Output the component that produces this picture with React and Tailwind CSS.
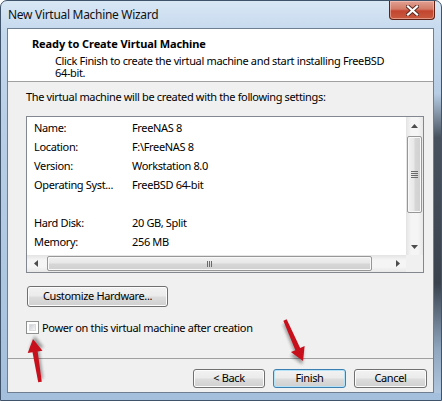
import React from "react";

function Arrow({ x1, y1, x2, y2 }) {
  const dx = x2 - x1;
  const dy = y2 - y1;
  const L = Math.sqrt(dx * dx + dy * dy);
  const a = (Math.atan2(dy, dx) * 180) / Math.PI;
  const h = 13;
  const pts = `0,-1.8 ${L - h},-2.6 ${L - h},-7.5 ${L},0 ${L - h},7.5 ${L - h},2.6 0,1.8`;
  return (
    <g transform={`translate(${x1} ${y1}) rotate(${a})`}>
      <polygon points={pts} fill="#000" opacity="0.35" transform="translate(3 2)" filter="url(#blur)" />
      <polygon points={pts} fill="#c8101c" />
    </g>
  );
}

function WinButton({ children, def = false, className = "" }) {
  return (
    <div
      className={`h-[19px] flex items-center justify-center rounded-[3px] border ${
        def
          ? "border-[#3c7fb1] shadow-[inset_0_0_0_1px_#b4e2f8]"
          : "border-[#707070] shadow-[inset_0_0_0_1px_#fcfcfc]"
      } bg-[linear-gradient(180deg,#f2f2f2_0%,#ebebeb_48%,#dddddd_52%,#cfcfcf_100%)] ${className}`}
    >
      {children}
    </div>
  );
}

const rows = [
  ["Name:", "FreeNAS 8"],
  ["Location:", "F:\\FreeNAS 8"],
  ["Version:", "Workstation 8.0"],
  ["Operating Syst...", "FreeBSD 64-bit"],
  ["", ""],
  ["Hard Disk:", "20 GB, Split"],
  ["Memory:", "256 MB"],
];

export default function App() {
  return (
    <div className="relative w-[442px] h-[401px] overflow-hidden bg-white font-['Segoe_UI','Noto_Sans','Liberation_Sans',sans-serif] text-[11px] tracking-[-0.35px] text-black">
      <div className="flex flex-col w-full h-full rounded-t-[7px] border border-[#3f536b] bg-[linear-gradient(180deg,#d9e7f5_0%,#c4d8ed_8%,#b9cfe7_30%,#aec7e1_70%,#a4bfdc_100%)]">
        {/* title bar */}
        <div className="h-[27px] flex items-start">
          <div className="pl-[7px] pt-[7px] leading-[14px] text-[12px] tracking-[-0.3px] text-[#111]">New Virtual Machine Wizard</div>
          <div className="ml-auto mr-[6px] w-[46px] h-[19px] rounded-b-[4px] border border-t-0 border-[#5e2217] bg-[linear-gradient(180deg,#e2a193_0%,#d27a66_45%,#c3452f_55%,#c85a3f_100%)] shadow-[inset_0_0_0_1px_rgba(255,210,200,0.5)] flex items-center justify-center">
            <svg width="13" height="11" viewBox="0 0 13 11">
              <path d="M2 1.5 L11 9.5 M11 1.5 L2 9.5" stroke="#5a2a22" strokeWidth="4" strokeLinecap="square" />
              <path d="M2 1.5 L11 9.5 M11 1.5 L2 9.5" stroke="#ffffff" strokeWidth="2.2" strokeLinecap="square" />
            </svg>
          </div>
        </div>
        {/* middle */}
        <div className="flex h-[365px]">
          <div className="w-[6px]" />
          <div className="w-[427px] flex flex-col border border-[#6f7f92] bg-[#f0f0f0]">
            {/* header */}
            <div className="h-[53px] bg-white border-b border-[#a0a0a0] pl-[24px] pt-[8px]">
              <div className="font-bold leading-[14px] tracking-[-0.1px]">Ready to Create Virtual Machine</div>
              <div className="pl-[23px] mt-[4px] leading-[12px] w-[365px]">
                Click Finish to create the virtual machine and start installing FreeBSD 64-bit.
              </div>
            </div>
            {/* body */}
            <div className="flex-1 flex flex-col pl-[18px] pt-[8px]">
              <div className="leading-[14px]">The virtual machine will be created with the following settings:</div>
              <div className="mt-[12px] w-[398px] h-[157px] border border-[#828790] bg-white flex flex-col">
                <div className="flex h-[138px]">
                  <div className="w-[379px] pt-[1px] overflow-hidden">
                    {rows.map(([k, v], i) => (
                      <div key={i} className="h-[19px] flex items-center pl-[7px] leading-[14px]">
                        <div className="w-[98px] shrink-0">{k}</div>
                        <div>{v}</div>
                      </div>
                    ))}
                  </div>
                  {/* vertical scrollbar */}
                  <div className="w-[17px] flex flex-col bg-[linear-gradient(90deg,#e3e3e3,#f5f5f5_30%,#f5f5f5_70%,#e8e8e8)]">
                    <div className="h-[17px] flex items-center justify-center">
                      <svg width="7" height="4" viewBox="0 0 7 4"><path d="M0 4 L3.5 0 L7 4 Z" fill="#4d4d4d" /></svg>
                    </div>
                    <div className="mx-[1px] mt-[2px] h-[77px] rounded-[2px] border border-[#979797] bg-[linear-gradient(90deg,#f1f1f1,#e8e8e8_45%,#d6d6d6_55%,#d0d0d0)] shadow-[inset_0_0_0_1px_#f8f8f8] flex flex-col items-center justify-center gap-[1px]">
                      <div className="w-[7px] h-[1px] bg-[#6a6a6a]" />
                      <div className="w-[7px] h-[1px] bg-[#6a6a6a]" />
                      <div className="w-[7px] h-[1px] bg-[#6a6a6a]" />
                      <div className="w-[7px] h-[1px] bg-[#6a6a6a]" />
                    </div>
                    <div className="flex-1" />
                    <div className="h-[17px] flex items-center justify-center">
                      <svg width="7" height="4" viewBox="0 0 7 4"><path d="M0 0 L3.5 4 L7 0 Z" fill="#4d4d4d" /></svg>
                    </div>
                  </div>
                </div>
                <div className="flex h-[17px]">
                  {/* horizontal scrollbar */}
                  <div className="w-[379px] flex items-stretch bg-[linear-gradient(180deg,#e3e3e3,#f5f5f5_30%,#f5f5f5_70%,#e8e8e8)]">
                    <div className="w-[17px] flex items-center justify-center">
                      <svg width="4" height="7" viewBox="0 0 4 7"><path d="M4 0 L0 3.5 L4 7 Z" fill="#4d4d4d" /></svg>
                    </div>
                    <div className="ml-[3px] my-[1px] w-[325px] rounded-[2px] border border-[#979797] bg-[linear-gradient(180deg,#f1f1f1,#e8e8e8_45%,#d6d6d6_55%,#d0d0d0)] shadow-[inset_0_0_0_1px_#f8f8f8] flex items-center justify-center gap-[1px]">
                      <div className="w-[1px] h-[6px] bg-[#6a6a6a]" />
                      <div className="w-[1px] h-[6px] bg-[#6a6a6a]" />
                      <div className="w-[1px] h-[6px] bg-[#6a6a6a]" />
                    </div>
                    <div className="flex-1" />
                    <div className="w-[17px] flex items-center justify-center">
                      <svg width="4" height="7" viewBox="0 0 4 7"><path d="M0 0 L4 3.5 L0 7 Z" fill="#4d4d4d" /></svg>
                    </div>
                  </div>
                  <div className="w-[17px] bg-[#f0f0f0]" />
                </div>
              </div>
              <WinButton className="mt-[13px] ml-[1px] w-[141px] h-[21px]">Customize Hardware...</WinButton>
              <div className="mt-[14px] flex items-center h-[13px]">
                <div className="w-[13px] h-[13px] border border-[#8e8f8f] bg-white p-[2px]">
                  <div className="w-full h-full bg-[linear-gradient(135deg,#cbcfd5,#f6f6f6)] border border-[#dadcde]" />
                </div>
                <div className="ml-[3px] leading-[14px]">Power on this virtual machine after creation</div>
              </div>
            </div>
            {/* footer */}
            <div className="h-[34px] border-t border-[#a0a0a0] flex justify-end items-start pt-[10px] pr-[6px] gap-[8px]">
              <WinButton className="w-[72px]">&lt; Back</WinButton>
              <WinButton def className="w-[73px]">Finish</WinButton>
              <WinButton className="w-[73px]">Cancel</WinButton>
            </div>
          </div>
          <div className="w-[7px] bg-[linear-gradient(180deg,#c9dbee_0%,#b7cde4_18%,#48525e_30%,#3a434e_70%,#8fa6be_88%,#b0c6de_100%)]" />
        </div>
        <div className="h-[7px]" />
      </div>
      <svg className="absolute inset-0 pointer-events-none" width="442" height="401">
        <defs>
          <filter id="blur" x="-50%" y="-50%" width="200%" height="200%">
            <feGaussianBlur stdDeviation="1.6" />
          </filter>
        </defs>
        <Arrow x1={40} y1={382} x2={33} y2={339} />
        <Arrow x1={285} y1={320} x2={303} y2={361} />
      </svg>
    </div>
  );
}
